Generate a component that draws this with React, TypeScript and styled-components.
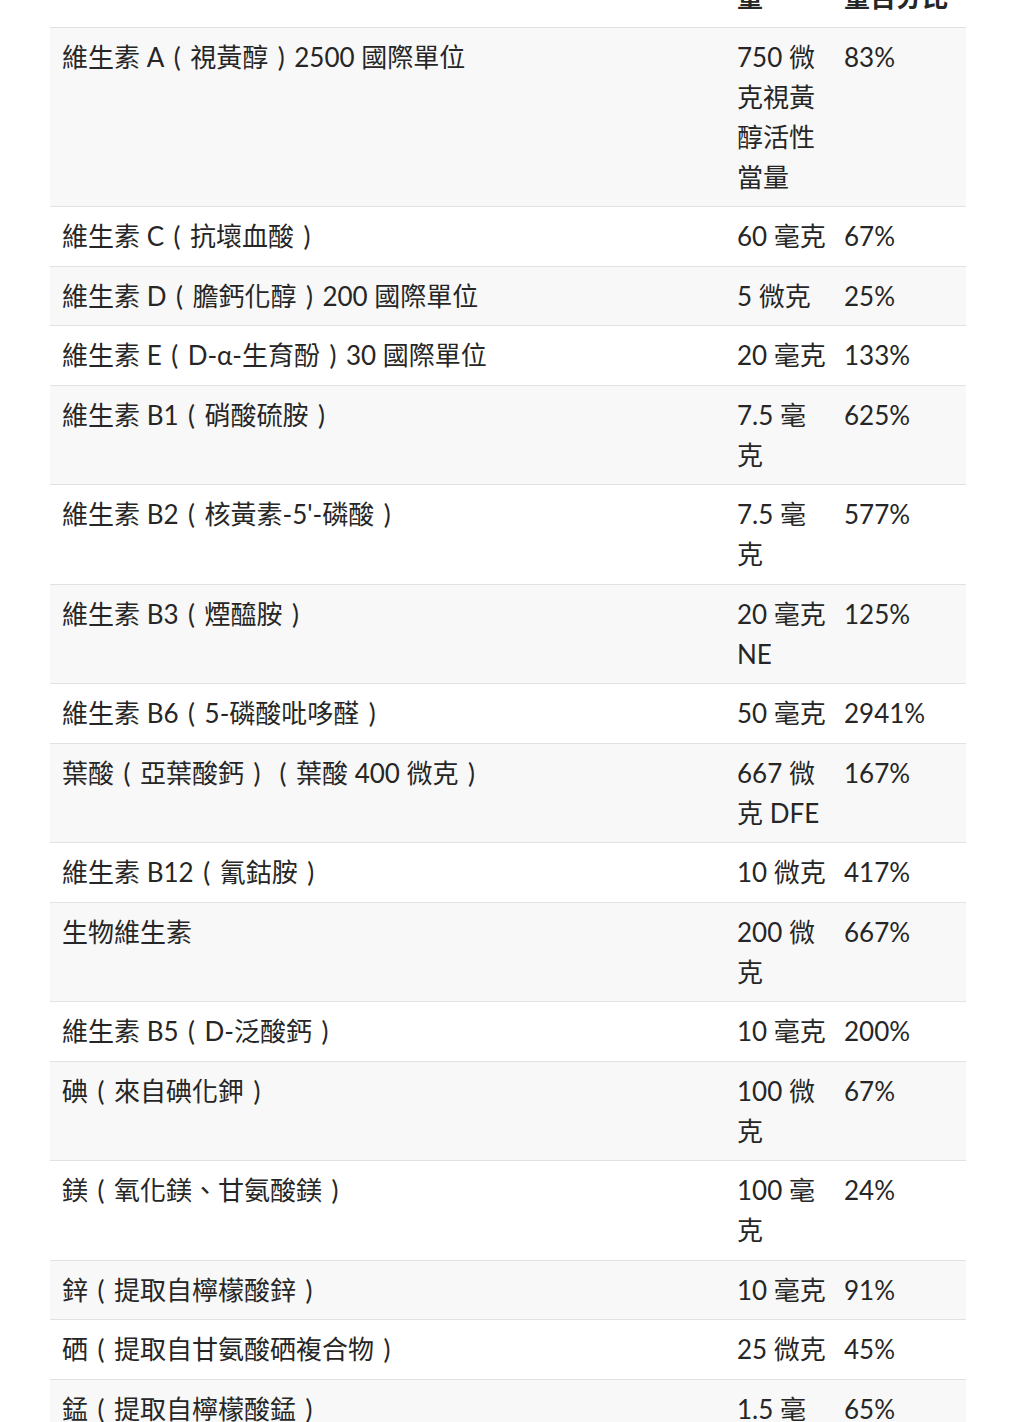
import React from "react";
import styled, { createGlobalStyle } from "styled-components";

const GlobalStyle = createGlobalStyle`
  html, body {
    margin: 0;
    padding: 0;
    background: #ffffff;
  }
  body {
    font-family: Lato, "Noto Sans CJK TC", "Noto Sans", sans-serif;
    color: #262626;
  }
`;

const Page = styled.div`
  padding: 0 58px 40px 50px;
  overflow: hidden;
`;

const Table = styled.table`
  width: 916px;
  margin-top: -72px;
  border-collapse: collapse;
  table-layout: fixed;
  font-size: 26px;
  line-height: 40px;
`;

const Row = styled.tr<{ $shaded?: boolean }>`
  background: ${(p) => (p.$shaded ? "#f8f8f8" : "#ffffff")};
  border-top: 1px solid #e2e2e2;
`;

const HeadCell = styled.th`
  text-align: left;
  vertical-align: top;
  font-weight: 700;
  padding: 9px 6px 9.5px 12px;
`;

const Cell = styled.td`
  vertical-align: top;
  padding: 9px 6px 9.5px 12px;
  word-break: break-word;
`;

const Paren = styled.span`
  display: inline-block;
  width: 1em;
  text-align: center;
  font-family: Lato, sans-serif;
`;

type Item = { name: string; amount: string; pct: string };

const items: Item[] = [
  { name: "維生素 A（視黃醇）2500 國際單位", amount: "750 微克視黃醇活性當量", pct: "83%" },
  { name: "維生素 C（抗壞血酸）", amount: "60 毫克", pct: "67%" },
  { name: "維生素 D（膽鈣化醇）200 國際單位", amount: "5 微克", pct: "25%" },
  { name: "維生素 E（D-α-生育酚）30 國際單位", amount: "20 毫克", pct: "133%" },
  { name: "維生素 B1（硝酸硫胺）", amount: "7.5 毫克", pct: "625%" },
  { name: "維生素 B2（核黃素-5'-磷酸）", amount: "7.5 毫克", pct: "577%" },
  { name: "維生素 B3（煙醯胺）", amount: "20 毫克 NE", pct: "125%" },
  { name: "維生素 B6（5-磷酸吡哆醛）", amount: "50 毫克", pct: "2941%" },
  { name: "葉酸（亞葉酸鈣）（葉酸 400 微克）", amount: "667 微克 DFE", pct: "167%" },
  { name: "維生素 B12（氰鈷胺）", amount: "10 微克", pct: "417%" },
  { name: "生物維生素", amount: "200 微克", pct: "667%" },
  { name: "維生素 B5（D-泛酸鈣）", amount: "10 毫克", pct: "200%" },
  { name: "碘（來自碘化鉀）", amount: "100 微克", pct: "67%" },
  { name: "鎂（氧化鎂、甘氨酸鎂）", amount: "100 毫克", pct: "24%" },
  { name: "鋅（提取自檸檬酸鋅）", amount: "10 毫克", pct: "91%" },
  { name: "硒（提取自甘氨酸硒複合物）", amount: "25 微克", pct: "45%" },
  { name: "錳（提取自檸檬酸錳）", amount: "1.5 毫克", pct: "65%" },
];

function Name({ text }: { text: string }) {
  const parts = text.split(/([（）])/);
  return (
    <>
      {parts.map((p, i) =>
        p === "（" ? (
          <Paren key={i}>(</Paren>
        ) : p === "）" ? (
          <Paren key={i}>)</Paren>
        ) : (
          <React.Fragment key={i}>{p}</React.Fragment>
        )
      )}
    </>
  );
}

export default function App() {
  return (
    <>
      <GlobalStyle />
      <Page>
        <Table>
          <colgroup>
            <col style={{ width: 675 }} />
            <col style={{ width: 107 }} />
            <col style={{ width: 134 }} />
          </colgroup>
          <thead>
            <tr>
              <HeadCell>成分</HeadCell>
              <HeadCell>每份含量</HeadCell>
              <HeadCell>每日攝取量百分比</HeadCell>
            </tr>
          </thead>
          <tbody>
            {items.map((it, i) => (
              <Row key={it.name} $shaded={i % 2 === 0}>
                <Cell>
                  <Name text={it.name} />
                </Cell>
                <Cell>{it.amount}</Cell>
                <Cell>{it.pct}</Cell>
              </Row>
            ))}
          </tbody>
        </Table>
      </Page>
    </>
  );
}
